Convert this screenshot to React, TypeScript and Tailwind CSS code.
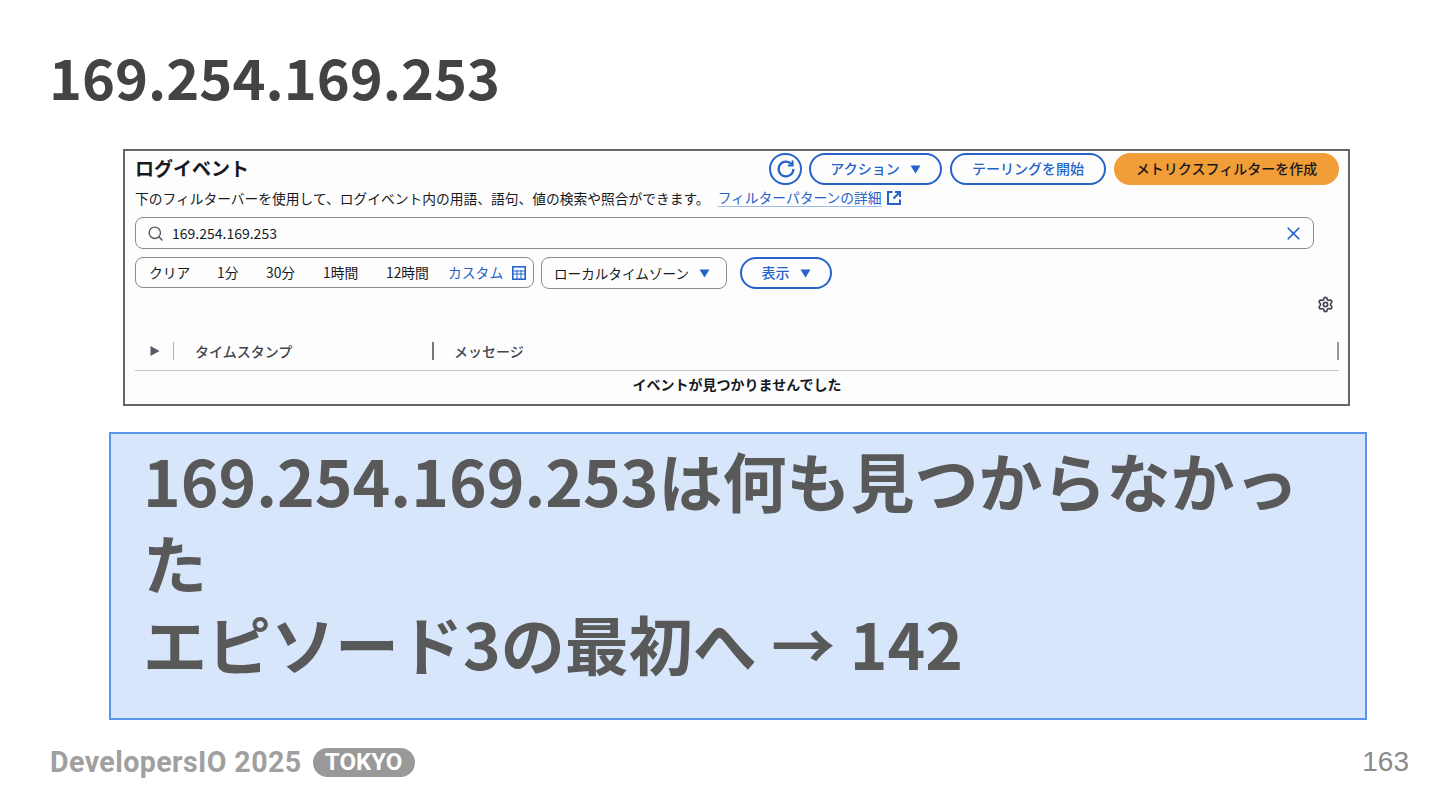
import { Search, X, Settings } from "lucide-react";

const cjk = "font-['Noto_Sans_CJK_JP','Noto_Sans',sans-serif]";

function Caret({ className = "" }: { className?: string }) {
  return (
    <svg width="11" height="9" viewBox="0 0 11 9" className={className}>
      <path d="M0.5 0.5 H10.5 L5.5 8.5 Z" fill="#2563c9" />
    </svg>
  );
}

function OutlineButton({ label, width }: { label: string; width: string }) {
  return (
    <div className={`${width} h-[32px] flex items-center justify-center gap-[10px] rounded-full border-2 border-[#2563c9] text-[14px] font-medium text-[#2563c9]`}>
      <span className="-mt-[2px]">{label}</span>
      {label !== "テーリングを開始" && <Caret />}
    </div>
  );
}

function LogPanel() {
  return (
    <div className="ml-[123px] mr-[90px] h-[257px] border-2 border-[#666] bg-[#fdfdfd] pl-[10px] pr-[9px] pt-[2px] text-[#16191f]">
      <div className="flex items-center h-[32px]">
        <span className="text-[19px] font-bold leading-[28px] -mt-[2px]">ログイベント</span>
        <div className="ml-auto flex items-center gap-[7px]">
          <div className="w-[33px] h-[32px] rounded-full border-2 border-[#2563c9] flex items-center justify-center">
            <svg width="22" height="22" viewBox="0 0 22 22" fill="none" stroke="#2563c9" strokeWidth="2.2">
              <path d="M16.6 6.2 A7.4 7.4 0 1 0 18.4 11" />
              <path d="M17.6 2.6 V7.4 H12.8" strokeWidth="2" />
            </svg>
          </div>
          <OutlineButton label="アクション" width="w-[133px]" />
          <div className="ml-[1px]">
            <OutlineButton label="テーリングを開始" width="w-[156px]" />
          </div>
          <div className="ml-[1px] w-[225px] h-[32px] rounded-full bg-[#f19d38] flex items-center justify-center text-[14px] font-medium text-[#16191f]">
            <span className="-mt-[2px]">メトリクスフィルターを作成</span>
          </div>
        </div>
      </div>
      <div className="flex items-center h-[26px] text-[13.75px]">
        下のフィルターバーを使用して、ログイベント内の用語、語句、値の検索や照合ができます。
        <span className="ml-[8px] text-[#2563c9] border-b border-[#9dbbe8] leading-[17px]">フィルターパターンの詳細</span>
        <svg width="16" height="16" viewBox="0 0 16 16" fill="none" stroke="#2563c9" strokeWidth="2" className="ml-[4px]">
          <path d="M6.5 2 H2 V14 H14 V9.5" />
          <path d="M9 2 H14 V7 M14 2 L7.5 8.5" />
        </svg>
      </div>
      <div className="mt-[6px] mr-[25px] h-[32px] flex items-center rounded-[8px] border border-[#8d8d8d] pl-[11px] pr-[9px]">
        <Search size={17} className="text-[#555b66]" />
        <span className="ml-[8px] text-[14px] leading-[32px]">169.254.169.253</span>
        <X size={21} className="ml-auto text-[#2563c9]" />
      </div>
      <div className="mt-[8px] flex items-start">
        <div className="w-[399px] h-[31px] flex items-center rounded-[8px] border border-[#8d8d8d] pl-[13px] text-[13.8px]">
          <span className="w-[68px]">クリア</span>
          <span className="w-[49px]">1分</span>
          <span className="w-[57px]">30分</span>
          <span className="w-[63px]">1時間</span>
          <span className="w-[62px]">12時間</span>
          <span className="text-[#2563c9]">カスタム</span>
          <svg width="14" height="14" viewBox="0 0 14 14" fill="none" stroke="#2563c9" strokeWidth="1" className="ml-[9px]">
            <rect x="0.8" y="0.8" width="12.4" height="12.4" strokeWidth="1.6" />
            <path d="M1 5 H13 M1 8 H13 M5 4 V13 M9 4 V13" />
          </svg>
        </div>
        <div className="ml-[7px] w-[186px] h-[32px] flex items-center rounded-[8px] border border-[#8d8d8d] pl-[12px] text-[13.6px]">
          ローカルタイムゾーン
          <Caret className="ml-[10px]" />
        </div>
        <div className="ml-[13px] w-[92px] h-[32px] flex items-center justify-center gap-[10px] rounded-full border-2 border-[#2563c9] text-[14px] font-medium text-[#2563c9]">
          <span className="-mt-[2px]">表示</span>
          <Caret />
        </div>
      </div>
      <div className="flex justify-end h-[18px] mt-[7px] pr-[5px]">
        <Settings size={17} strokeWidth={2.4} className="text-[#424650]" />
      </div>
      <div className="mt-[18px] h-[39px] flex items-center border-b border-[#c4c4c4] text-[14px] font-medium text-[#424650]">
        <svg width="10" height="12" viewBox="0 0 10 12" className="ml-[15px]"><path d="M0.5 1 V11 L9.5 6 Z" fill="#555b66" /></svg>
        <span className="ml-[13px] h-[18px] w-px bg-[#b0b0b0]" />
        <span className="ml-[21px] w-[237px]">タイムスタンプ</span>
        <span className="h-[18px] w-[2px] bg-[#777]" />
        <span className="ml-[20px]">メッセージ</span>
        <span className="ml-auto h-[18px] w-[2px] bg-[#999]" />
      </div>
      <div className="h-[26px] flex items-center justify-center text-[14px] font-bold">イベントが見つかりませんでした</div>
    </div>
  );
}

export default function App() {
  return (
    <div className={`w-[1440px] h-[810px] overflow-hidden bg-white flex flex-col ${cjk}`}>
      <h1 className="pl-[49px] pt-[36px] h-[149px] text-[56px] leading-[80px] font-bold text-[#434343]">169.254.169.253</h1>
      <LogPanel />
      <div className="ml-[109px] mr-[73px] mt-[26px] h-[288px] border-2 border-[#5b93e6] bg-[#d7e6fb] pl-[32px] pt-[5px] pr-[30px] text-[#595959] text-[64px] leading-[81.5px] font-bold">
        169.254.169.253は何も見つからなかった
        <br />
        エピソード3の最初へ → 142
      </div>
      <div className="flex items-center pl-[50px] pr-[31px] h-[44px] mt-[20px] text-[#a0a0a0]">
        <span className="text-[28.6px] font-bold font-['Roboto',sans-serif] leading-none tracking-[0.4px]">DevelopersIO 2025</span>
        <span className="ml-[11px] h-[29px] w-[102px] justify-center rounded-full bg-[#999] text-white flex items-center text-[24px] font-bold font-['Roboto',sans-serif]">TOKYO</span>
        <span className="ml-auto text-[28px] font-['Liberation_Sans',sans-serif] text-[#8a8a8a]">163</span>
      </div>
    </div>
  );
}
